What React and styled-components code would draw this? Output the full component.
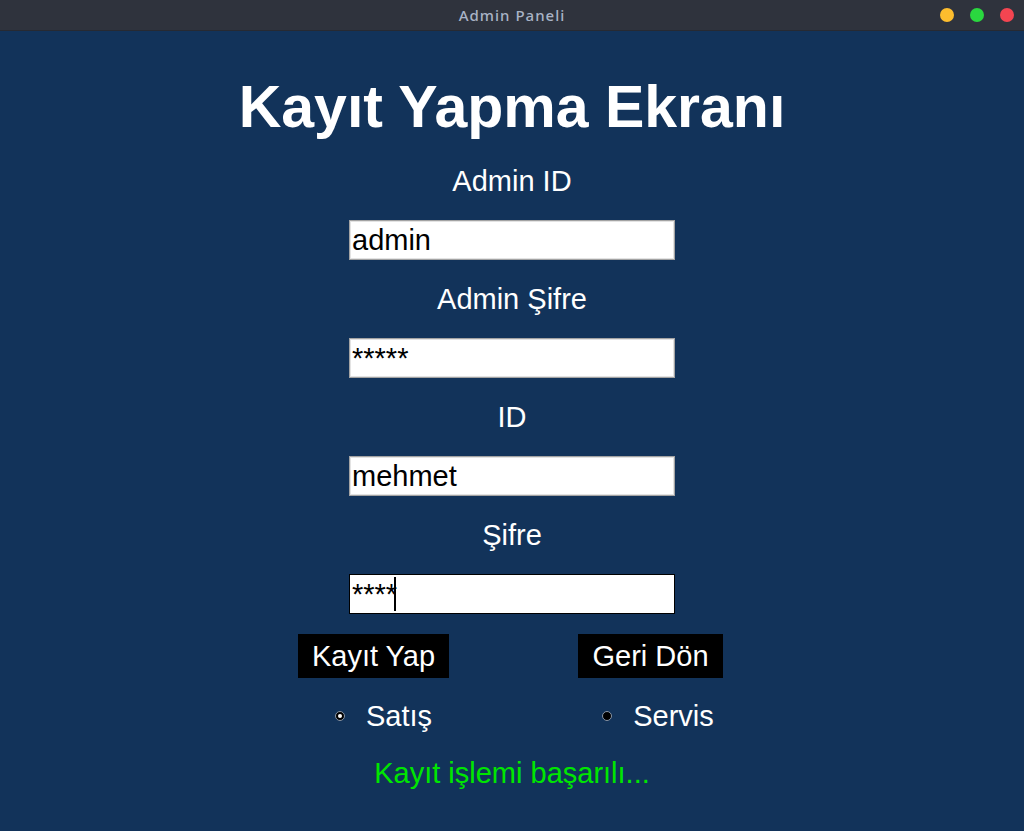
import React from 'react';
import styled, { createGlobalStyle } from 'styled-components';

const GlobalStyle = createGlobalStyle`
	html, body {
		margin: 0;
		padding: 0;
		background: #12335a;
	}
	* {
		box-sizing: border-box;
	}
`;

const Window = styled.div`
	width: 1024px;
	height: 831px;
	display: flex;
	flex-direction: column;
	background: #12335a;
	font-family: 'Liberation Sans', Arial, sans-serif;
	overflow: hidden;
`;

const TitleBar = styled.div`
	height: 31px;
	flex-shrink: 0;
	display: flex;
	align-items: center;
	justify-content: center;
	position: relative;
	background: #2f333d;
	border-bottom: 1px solid #272a32;
	.title {
		font-family: 'Noto Sans', 'DejaVu Sans', sans-serif;
		font-size: 15px;
		font-weight: 500;
		color: #a9b3c6;
		letter-spacing: 1px;
	}
`;

const Dots = styled.div`
	position: absolute;
	right: 10px;
	top: 0;
	height: 30px;
	display: flex;
	align-items: center;
	gap: 16px;
`;

const Dot = styled.span`
	width: 14px;
	height: 14px;
	border-radius: 50%;
	background: ${(props) => props.color};
`;

const Content = styled.div`
	display: flex;
	flex-direction: column;
	align-items: center;
	color: #ffffff;
`;

const Heading = styled.h1`
	margin: 43px 0 0;
	height: 68px;
	line-height: 67px;
	font-size: 59px;
	font-weight: 700;
	color: #ffffff;
`;

const Label = styled.div`
	height: 78px;
	display: flex;
	align-items: center;
	justify-content: center;
	font-size: 29px;
	color: #ffffff;
`;

const Field = styled.div`
	position: relative;
	width: 326px;
	height: 40px;
`;

const Input = styled.input`
	width: 100%;
	height: 100%;
	padding: 0 2px;
	margin: 0;
	font-family: 'Liberation Sans', Arial, sans-serif;
	font-size: 29px;
	color: #000000;
	background: #ffffff;
	border: 1px solid ${(props) => (props.$focused ? '#000000' : '#a3a3a3')};
	box-shadow: inset 0 0 0 1px ${(props) => (props.$focused ? '#ffffff' : '#e3e3e3')};
	outline: none;
	border-radius: 0;
	caret-color: transparent;
`;

const Caret = styled.span`
	position: absolute;
	left: 45px;
	top: 3px;
	width: 2px;
	height: 34px;
	background: #000000;
`;

const Grid = styled.div`
	display: grid;
	grid-template-columns: 277px 277px;
	justify-items: center;
`;

const ButtonRow = styled(Grid)`
	margin-top: 20px;
`;

const Button = styled.button`
	height: 44px;
	padding: 0 14px;
	border: none;
	border-radius: 0;
	background: #000000;
	color: #ffffff;
	font-family: 'Liberation Sans', Arial, sans-serif;
	font-size: 29px;
	cursor: pointer;
`;

const RadioRow = styled(Grid)`
	margin-top: 22px;
`;

const Radio = styled.label`
	display: flex;
	align-items: center;
	gap: 21px;
	height: 32px;
	padding-left: ${(props) => props.$shift}px;
	font-size: 29px;
	color: #ffffff;
	cursor: pointer;
`;

const Indicator = styled.span`
	width: 10px;
	height: 10px;
	border-radius: 50%;
	background: #000000;
	border: 1px solid #8a96a6;
	display: flex;
	align-items: center;
	justify-content: center;
	&::after {
		content: '';
		width: 4px;
		height: 4px;
		border-radius: 50%;
		background: ${(props) => (props.$checked ? '#ffffff' : 'transparent')};
	}
`;

const Message = styled.div`
	margin-top: 25px;
	height: 32px;
	line-height: 32px;
	font-size: 29px;
	color: #00e600;
`;

const fields = [
	{ label: 'Admin ID', value: 'admin' },
	{ label: 'Admin Şifre', value: '*****' },
	{ label: 'ID', value: 'mehmet' },
	{ label: 'Şifre', value: '****', focused: true },
];

const App = () => {
	return (
		<Window>
			<GlobalStyle />
			<TitleBar>
				<span className="title">Admin Paneli</span>
				<Dots>
					<Dot color="#fdbd2e" />
					<Dot color="#2ad83f" />
					<Dot color="#f44551" />
				</Dots>
			</TitleBar>
			<Content>
				<Heading>Kayıt Yapma Ekranı</Heading>
				{fields.map((f) => (
					<React.Fragment key={f.label}>
						<Label>{f.label}</Label>
						<Field>
							<Input defaultValue={f.value} $focused={f.focused} readOnly />
							{f.focused && <Caret />}
						</Field>
					</React.Fragment>
				))}
				<ButtonRow>
					<Button>Kayıt Yap</Button>
					<Button>Geri Dön</Button>
				</ButtonRow>
				<RadioRow>
					<Radio $shift={20}>
						<Indicator $checked />
						Satış
					</Radio>
					<Radio $shift={15}>
						<Indicator />
						Servis
					</Radio>
				</RadioRow>
				<Message>Kayıt işlemi başarılı...</Message>
			</Content>
		</Window>
	);
};

export default App;
